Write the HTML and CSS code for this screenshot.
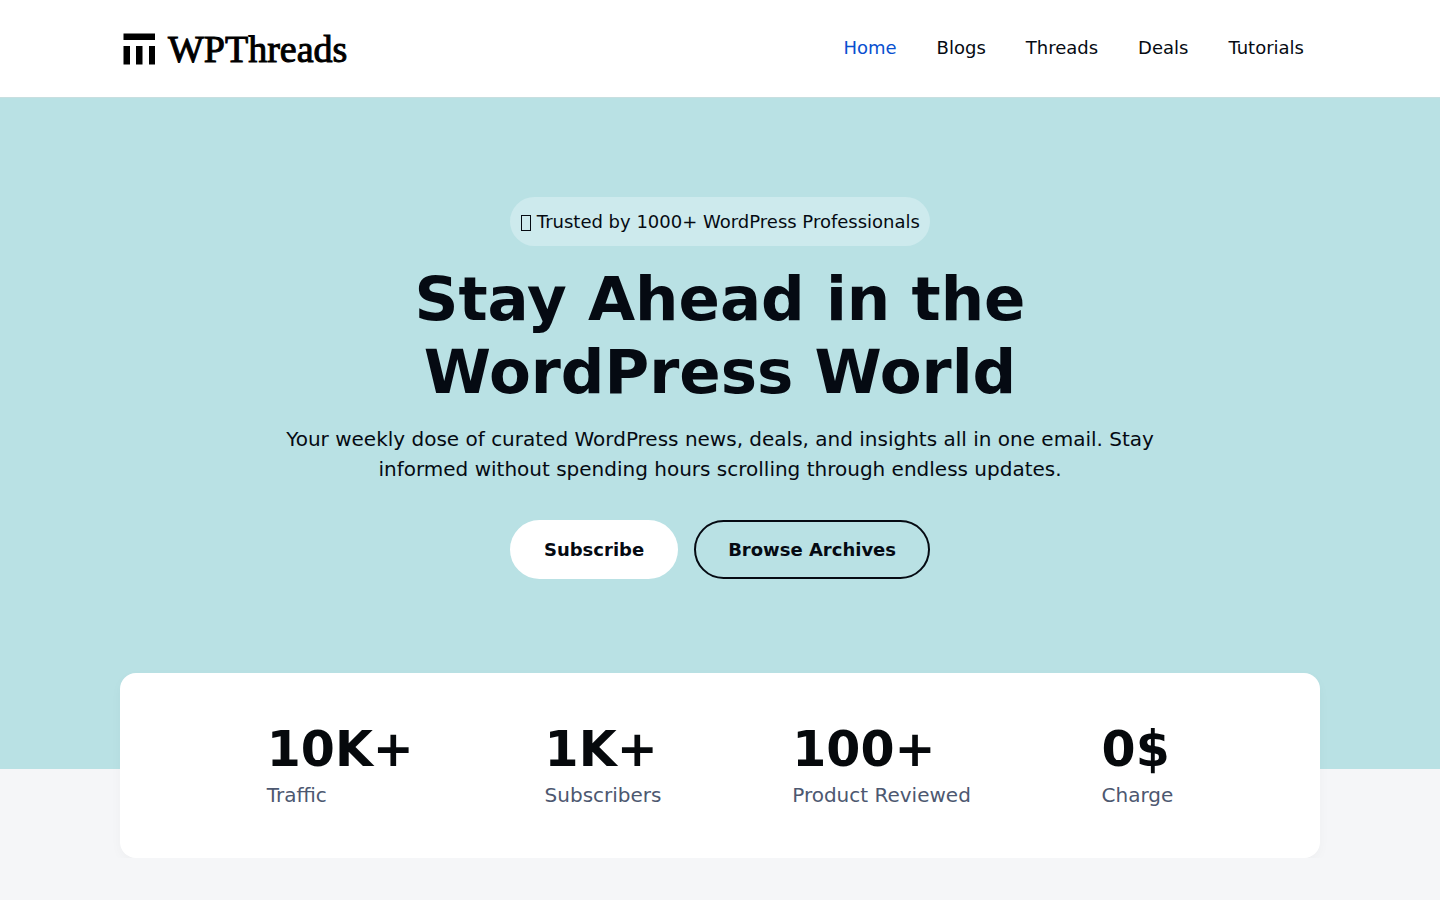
FILE: index.html
```html
<!DOCTYPE html>
<html lang="en">
<head>
  <meta charset="utf-8">
  <meta name="viewport" content="width=device-width, initial-scale=1">
  <title>WPThreads</title>
  <link rel="stylesheet" href="styles.css">
</head>
<body>
  <header class="site-header">
    <div class="container header-inner">
      <a class="logo" href="#">
        <svg class="logo-mark" viewBox="0 0 32 32" aria-hidden="true">
          <path d="M.5.500h31.500v6.500H.5zM.5 13H7v18.500H.5zM13 13h6.500v18.500H13zM26 13h6v18.500h-6z"/>
        </svg>
        <span>WPThreads</span>
      </a>
      <nav class="main-nav">
        <a class="active" href="#">Home</a>
        <a href="#">Blogs</a>
        <a href="#">Threads</a>
        <a href="#">Deals</a>
        <a href="#">Tutorials</a>
      </nav>
    </div>
  </header>

  <main>
    <section class="hero">
      <p class="badge"><span class="badge-icon"></span> Trusted by 1000+ WordPress Professionals</p>
      <h1>Stay Ahead in the WordPress World</h1>
      <p class="intro">Your weekly dose of curated WordPress news, deals, and insights all in one email. Stay informed without spending hours scrolling through endless updates.</p>
      <div class="buttons">
        <a class="btn btn-white" href="#">Subscribe</a>
        <a class="btn btn-outline" href="#">Browse Archives</a>
      </div>
    </section>

    <!-- Stats card, overlaps the hero -->
    <section class="container stats">
      <div class="stat">
        <h2>10K+</h2>
        <p>Traffic</p>
      </div>
      <div class="stat">
        <h2>1K+</h2>
        <p>Subscribers</p>
      </div>
      <div class="stat">
        <h2>100+</h2>
        <p>Product Reviewed</p>
      </div>
      <div class="stat">
        <h2>0$</h2>
        <p>Charge</p>
      </div>
    </section>
  </main>
</body>
</html>
```

FILE: styles.css
```css
* {
  box-sizing: border-box;
}

body {
  margin: 0;
  background-color: #f5f6f8;
  color: #050a12;
  font-family: "DejaVu Sans", sans-serif;
  font-size: 18px;
  line-height: 27px;
}

h1, h2, p {
  margin: 0;
}

a {
  color: inherit;
  text-decoration: none;
}

.container {
  width: 100%;
  max-width: 1200px;
  margin: 0 auto;
}

/* Header */
.site-header {
  background-color: #fff;
  border-bottom: 1px solid #c8dfe0;
}
.header-inner {
  display: flex;
  align-items: center;
  justify-content: space-between;
  padding: 27px 16px 26px 3px;
}
.logo {
  display: flex;
  align-items: center;
  gap: 13px;
  color: #000;
  font-family: "Liberation Serif", serif;
  font-size: 38px;
  line-height: 44px;
  -webkit-text-stroke: 1px #000;
}
.logo-mark {
  width: 32px;
  height: 32px;
}
.main-nav {
  display: flex;
  flex-wrap: wrap;
  gap: 40px;
  padding-bottom: 3px;
}
.main-nav .active {
  color: #0850d0;
}

/* Hero */
.hero {
  display: flex;
  flex-direction: column;
  align-items: center;
  padding: 99px 16px 190px;
  background-color: #b9e1e4;
  text-align: center;
}
.badge {
  padding: 11px 10px;
  border-radius: 25px;
  background-color: #cdeaed;
}
.badge-icon {
  display: inline-block;
  width: 10px;
  height: 16px;
  margin-left: 1px;
  border: 1px solid #050a12;
  vertical-align: -3px;
}
.hero h1 {
  max-width: 700px;
  margin-top: 16px;
  font-size: 61px;
  line-height: 73px;
}
.intro {
  max-width: 900px;
  margin-top: 16px;
  font-size: 20px;
  line-height: 30px;
}
.buttons {
  display: flex;
  flex-wrap: wrap;
  justify-content: center;
  gap: 16px;
  margin-top: 36px;
}
.btn {
  padding: 14px 32px;
  border: 2px solid #050a12;
  border-radius: 30px;
  font-weight: 700;
}
.btn-white {
  border-color: #fff;
  background-color: #fff;
}

/* Stats */
.stats {
  position: relative;
  display: flex;
  flex-wrap: wrap;
  justify-content: space-evenly;
  margin-top: -96px;
  padding: 48px 16px;
  border-radius: 16px;
  background-color: #fff;
  box-shadow: 0 4px 12px rgba(0, 0, 0, .03);
}
.stat h2 {
  margin-bottom: 2px;
  color: #06090c;
  font-size: 49px;
  line-height: 57px;
}
.stat p {
  color: #4d5870;
  font-size: 20px;
  line-height: 30px;
}
```
